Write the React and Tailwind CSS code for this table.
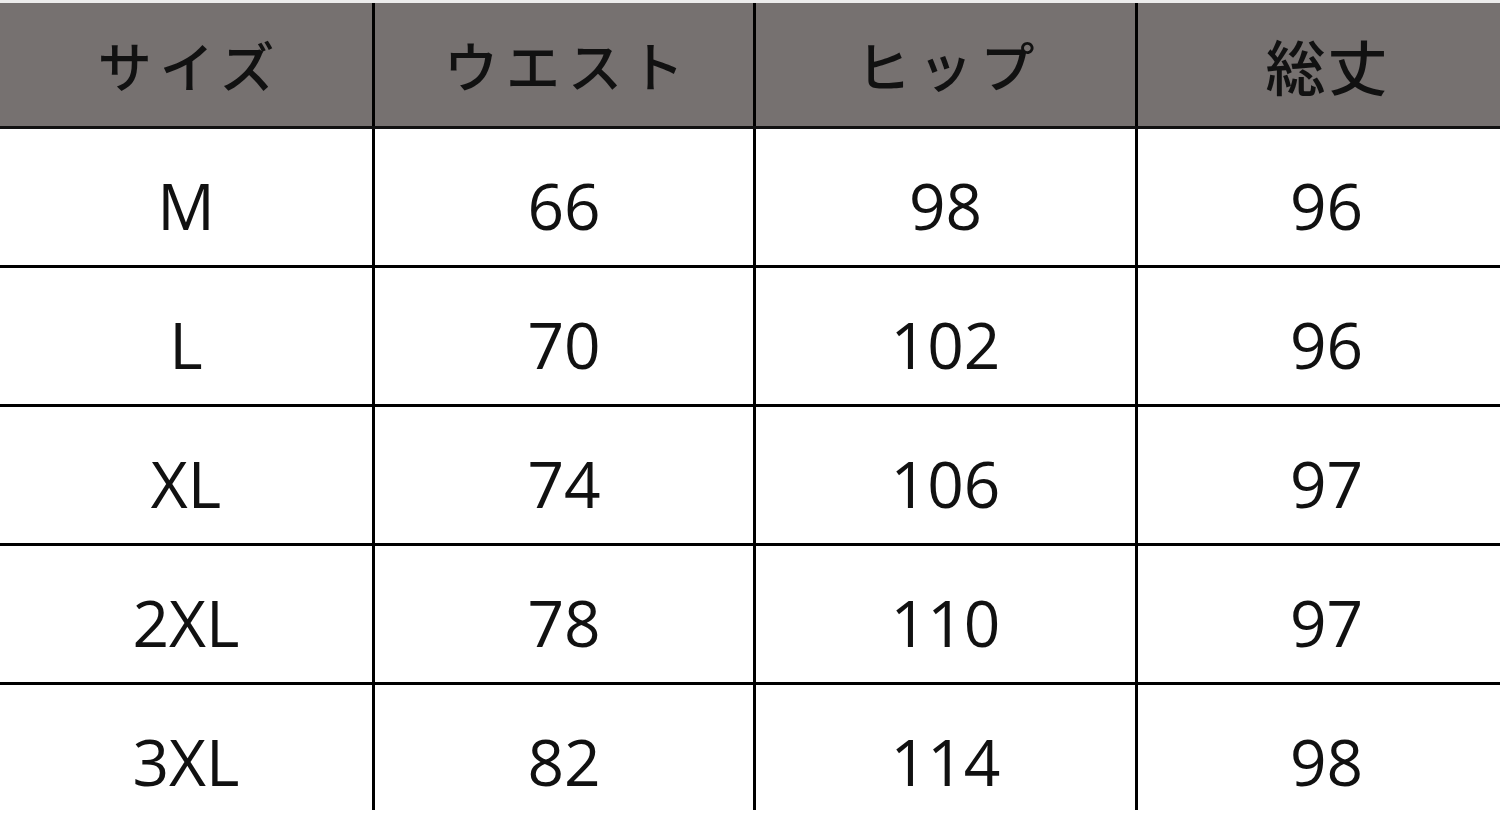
const headers = ["サイズ", "ウエスト", "ヒップ", "総丈"];

const rows = [
  ["M", "66", "98", "96"],
  ["L", "70", "102", "96"],
  ["XL", "74", "106", "97"],
  ["2XL", "78", "110", "97"],
  ["3XL", "82", "114", "98"],
];

const cols = [
  "w-[372px]",
  "w-[381px] border-l-[3px] border-black",
  "w-[382px] border-l-[3px] border-black",
  "w-[380px] border-l-[3px] border-black",
];

const App = () => {
  return (
    <div className="w-[1500px] h-[831px] bg-white overflow-hidden">
      <div className="w-[1515px]">
        <div className="h-[3px] bg-[#ececec]" />
        <div className="flex h-[126px] bg-[#767170] border-b-[3px] border-[#111]">
          {headers.map((h, i) => (
            <div
              key={h}
              className={`${cols[i]} flex items-center justify-center text-[54px] leading-none text-[#111] font-['Noto_Sans_CJK_JP','Noto_Sans',sans-serif] font-medium ${i === 3 ? "tracking-[2px] pl-[2px]" : "tracking-[8px] pl-[8px]"}`}
            >
              <span className={i === 3 ? "text-[60px]" : ""}>{h}</span>
            </div>
          ))}
        </div>
        {rows.map((row, r) => (
          <div
            key={row[0]}
            className={`flex ${r === rows.length - 1 ? "h-[125px]" : "h-[139px] border-b-[3px] border-black"}`}
          >
            {row.map((cell, i) => (
              <div
                key={i}
                className={`${cols[i]} flex items-start justify-center pt-[45px] text-[64px] leading-none text-[#111] font-['Open_Sans',sans-serif] font-medium`}
              >
                {cell}
              </div>
            ))}
          </div>
        ))}
      </div>
    </div>
  );
};

export default App;
